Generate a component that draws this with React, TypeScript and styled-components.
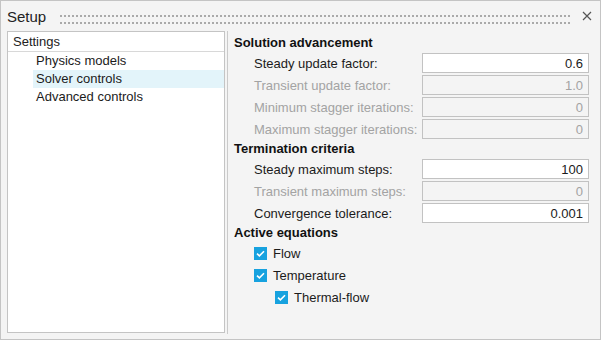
import React, { useState } from "react";
import styled, { createGlobalStyle } from "styled-components";

const GlobalStyle = createGlobalStyle`
  html, body {
    margin: 0;
    padding: 0;
    background: #f4f4f4;
  }
  * {
    box-sizing: border-box;
  }
`;

const Window = styled.div`
  width: 601px;
  height: 340px;
  border: 1px solid #c4c4c4;
  background: #f4f4f4;
  display: flex;
  flex-direction: column;
  font-family: "Liberation Sans", Arial, sans-serif;
  font-size: 13px;
  color: #1b1b1b;
  overflow: hidden;
`;

const TitleBar = styled.div`
  height: 30px;
  display: flex;
  align-items: center;
  padding: 0 8px 0 6px;
  flex-shrink: 0;
`;

const TitleText = styled.span`
  font-size: 15px;
  color: #222;
  margin-top: 1px;
`;

// two rows of small square dots, as the dock grip of the panel
const Grip = styled.div`
  flex: 1;
  align-self: flex-start;
  height: 9px;
  margin: 14px 11px 0 14px;
  background-image: conic-gradient(at 2px 2px, transparent 75%, #aaaaaa 0);
  background-size: 4px 7px;
`;

const CloseButton = styled.button`
  border: none;
  background: none;
  padding: 0;
  width: 10px;
  height: 10px;
  display: flex;
  align-items: center;
  justify-content: center;
  cursor: pointer;
`;

const Body = styled.div`
  flex: 1;
  display: flex;
  padding: 0 0 6px 6px;
  min-height: 0;
`;

const TreePanel = styled.div`
  width: 218px;
  background: #fff;
  border: 1px solid #c4c4c4;
  display: flex;
  flex-direction: column;
`;

const TreeHeader = styled.div`
  height: 20px;
  line-height: 19px;
  padding-left: 5px;
  border-bottom: 1px solid #d8d8d8;
  color: #222;
`;

const TreeItem = styled.div<{ $selected?: boolean }>`
  height: 18px;
  line-height: 18px;
  margin-left: 25px;
  padding-left: 3px;
  color: #1b1b1b;
  background: ${(p) => (p.$selected ? "#e3f4fa" : "transparent")};
  cursor: default;
`;

const Splitter = styled.div`
  width: 3px;
  border-right: 1px solid #cacaca;
  margin-bottom: -1px;
`;

const Content = styled.div`
  flex: 1;
  padding: 3px 11px 0 6px;
  display: flex;
  flex-direction: column;
`;

const SectionTitle = styled.div`
  height: 18px;
  line-height: 18px;
  font-weight: bold;
  color: #111;
`;

const FieldRow = styled.div<{ $disabled?: boolean }>`
  height: 22px;
  display: flex;
  align-items: center;
  padding-left: 20px;
  color: ${(p) => (p.$disabled ? "#a3a3a3" : "#1b1b1b")};
`;

const FieldLabel = styled.span`
  width: 168px;
  white-space: nowrap;
`;

const FieldInput = styled.input`
  width: 167px;
  height: 20px;
  border: 1px solid #c2c2c2;
  background: #fff;
  text-align: right;
  font-family: "Liberation Sans", Arial, sans-serif;
  font-size: 13px;
  color: #1b1b1b;
  padding: 0 5px 0 4px;
  outline: none;

  &:disabled {
    background: #f4f4f4;
    color: #a3a3a3;
  }
`;

const CheckRow = styled.label<{ $indent: number }>`
  height: 22px;
  display: flex;
  align-items: center;
  padding-left: ${(p) => p.$indent}px;
  gap: 6px;
  cursor: default;
`;

const CheckBox = styled.span<{ $checked: boolean }>`
  width: 13px;
  height: 13px;
  background: ${(p) => (p.$checked ? "#17a2df" : "#fff")};
  border: ${(p) => (p.$checked ? "none" : "1px solid #9a9a9a")};
  display: flex;
  align-items: center;
  justify-content: center;
`;

const CloseIcon = () => (
  <svg width="10" height="10" viewBox="0 0 10 10">
    <path d="M1 1 L9 9 M9 1 L1 9" stroke="#555" strokeWidth="1.2" fill="none" />
  </svg>
);

const CheckIcon = () => (
  <svg width="9" height="7" viewBox="0 0 9 7">
    <path d="M1 3.6 L3.4 5.8 L8 1.2" stroke="#fff" strokeWidth="1.6" fill="none" />
  </svg>
);

interface Field {
  label: string;
  value: string;
  disabled?: boolean;
}

const solutionFields: Field[] = [
  { label: "Steady update factor:", value: "0.6" },
  { label: "Transient update factor:", value: "1.0", disabled: true },
  { label: "Minimum stagger iterations:", value: "0", disabled: true },
  { label: "Maximum stagger iterations:", value: "0", disabled: true },
];

const terminationFields: Field[] = [
  { label: "Steady maximum steps:", value: "100" },
  { label: "Transient maximum steps:", value: "0", disabled: true },
  { label: "Convergence tolerance:", value: "0.001" },
];

const FieldList: React.FC<{ fields: Field[] }> = ({ fields }) => (
  <>
    {fields.map((f) => (
      <FieldRow key={f.label} $disabled={f.disabled}>
        <FieldLabel>{f.label}</FieldLabel>
        <FieldInput defaultValue={f.value} disabled={f.disabled} />
      </FieldRow>
    ))}
  </>
);

const App: React.FC = () => {
  const [selected, setSelected] = useState("Solver controls");
  const [checks, setChecks] = useState({ flow: true, temperature: true, thermal: true });

  const toggle = (key: keyof typeof checks) =>
    setChecks((c) => ({ ...c, [key]: !c[key] }));

  const equations: { key: keyof typeof checks; label: string; indent: number }[] = [
    { key: "flow", label: "Flow", indent: 20 },
    { key: "temperature", label: "Temperature", indent: 20 },
    { key: "thermal", label: "Thermal-flow", indent: 41 },
  ];

  return (
    <>
      <GlobalStyle />
      <Window>
        <TitleBar>
          <TitleText>Setup</TitleText>
          <Grip />
          <CloseButton aria-label="Close">
            <CloseIcon />
          </CloseButton>
        </TitleBar>
        <Body>
          <TreePanel>
            <TreeHeader>Settings</TreeHeader>
            {["Physics models", "Solver controls", "Advanced controls"].map((item) => (
              <TreeItem
                key={item}
                $selected={selected === item}
                onClick={() => setSelected(item)}
              >
                {item}
              </TreeItem>
            ))}
          </TreePanel>
          <Splitter />
          <Content>
            <SectionTitle>Solution advancement</SectionTitle>
            <FieldList fields={solutionFields} />
            <SectionTitle>Termination criteria</SectionTitle>
            <FieldList fields={terminationFields} />
            <SectionTitle>Active equations</SectionTitle>
            {equations.map((eq) => (
              <CheckRow key={eq.key} $indent={eq.indent} onClick={() => toggle(eq.key)}>
                <CheckBox $checked={checks[eq.key]}>{checks[eq.key] && <CheckIcon />}</CheckBox>
                {eq.label}
              </CheckRow>
            ))}
          </Content>
        </Body>
      </Window>
    </>
  );
};

export default App;
